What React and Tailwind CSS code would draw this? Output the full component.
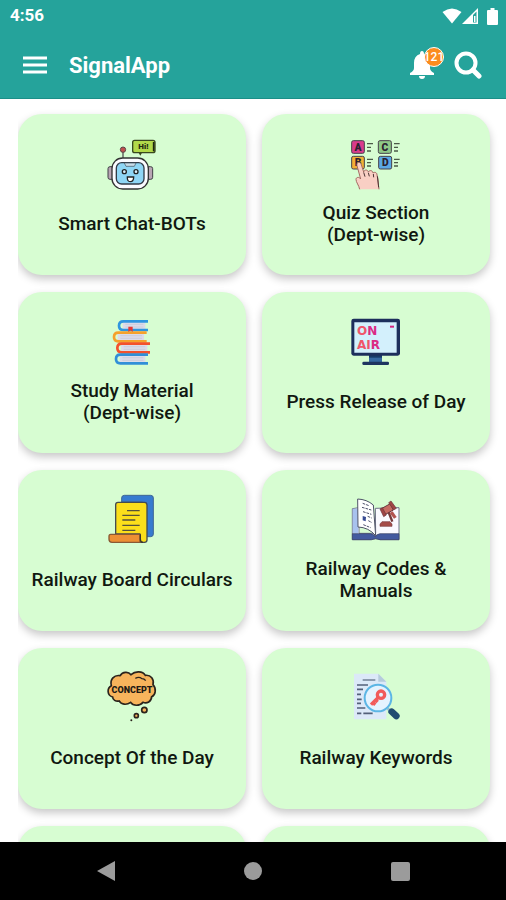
const RobotIcon = () => (
    <svg viewBox="51 24 150 150" className="h-[50px] w-[50px] overflow-visible" aria-hidden="true">
        <rect x="128" y="31" width="67" height="37" rx="6" fill="#b2d94a" stroke="#39481f" strokeWidth="4" />
        <path d="M191 36v28" stroke="#1c2512" strokeWidth="5" />
        <path d="M145 67l6 10 6-10z" fill="#39481f" />
        <text x="160" y="58" textAnchor="middle" fontSize="24" fontWeight="900" fill="#222a12" className="font-['Roboto',sans-serif]">Hi!</text>
        <path d="M99 66v18" stroke="#555" strokeWidth="4" />
        <circle cx="99" cy="59" r="8" fill="#c0504d" stroke="#5b4a4a" strokeWidth="3" />
        <rect x="54" y="110" width="18" height="38" rx="6" fill="#b9a6b4" stroke="#3f3f46" strokeWidth="3" />
        <rect x="170" y="110" width="18" height="38" rx="6" fill="#b9a6b4" stroke="#3f3f46" strokeWidth="3" />
        <rect x="66" y="84" width="109" height="93" rx="32" fill="#fbfbff" stroke="#333" strokeWidth="4" />
        <rect x="79" y="98" width="83" height="64" rx="16" fill="#8fd6f5" stroke="#333c48" strokeWidth="4" />
        <path d="M103 99h35l-5 10h-25z" fill="#c8ddea" stroke="#3d4b58" strokeWidth="2" />
        <circle cx="103" cy="125" r="6" fill="#d9f3ff" stroke="#222" strokeWidth="4" />
        <circle cx="138" cy="125" r="6" fill="#d9f3ff" stroke="#222" strokeWidth="4" />
        <path d="M112 141h19q0 14-10 14t-9-14z" fill="#fff" stroke="#222" strokeWidth="4" />
    </svg>
)

const QuizIcon = () => (
    <svg viewBox="48 24 150 150" className="h-[50px] w-[50px] overflow-visible" aria-hidden="true">
        <g stroke="#46404a" strokeWidth="3">
            <rect x="50" y="32" width="38" height="38" rx="5" fill="#d93b8c" />
            <rect x="130" y="32" width="39" height="38" rx="5" fill="#8fc987" />
            <rect x="50" y="79" width="38" height="38" rx="5" fill="#f2b035" />
            <rect x="131" y="79" width="39" height="38" rx="5" fill="#5ba8e5" />
        </g>
        <g fontSize="31" fontWeight="900" fill="#2a2130" textAnchor="middle" className="font-['Roboto',sans-serif]">
            <text x="69" y="62">A</text>
            <text x="150" y="62">C</text>
            <text x="69" y="109">B</text>
            <text x="151" y="109">D</text>
        </g>
        <path d="M96 41h18M96 52h12M96 63h12M177 41h17M177 52h12M177 63h12M96 88h18M96 98h12M96 108h12M177 88h17M177 98h12M177 108h12" stroke="#4b5a47" strokeWidth="4" />
        <path d="M74 178c-2-12-11-21-11-30 0-7 10-8 14-1l-11-40c-2-11 10-14 13-3l7 22c2-8 12-8 14 0 4-7 13-5 14 3 5-4 12-2 12 6 5 13 3 29 6 43z" fill="#f9cfc4" />
        <path d="M74 178c-2-12-11-21-11-30 0-7 10-8 14-1l-11-40c-2-11 10-14 13-3l7 22c2-8 12-8 14 0 4-7 13-5 14 3 5-4 12-2 12 6 5 13 3 29 6 43" fill="none" stroke="#a36a62" strokeWidth="3" strokeLinejoin="round" />
        <path d="M86 127l4 13M100 128l3 11M115 132l1 10M127 139l4 33" stroke="#4d3434" strokeWidth="3" fill="none" />
    </svg>
)

const Book = ({ x, y, color, end }) => (
    <g>
        <path d={`M${x + 14} ${y + 5}H${end - 8}v24H${x + 14}z`} fill="#dcdbe9" />
        <path d={`M${x + 22} ${y + 12}H${end - 14}M${x + 22} ${y + 20}H${end - 14}`} stroke="#c5c5d6" strokeWidth="2" />
        <path d={`M${end} ${y + 3}H${x + 16}Q${x + 3} ${y + 3} ${x + 3} ${y + 16}T${x + 16} ${y + 29}H${end}`} fill="none" stroke={color} strokeWidth="8" />
    </g>
)

const BooksIcon = () => (
    <svg viewBox="51 18 150 150" className="h-[50px] w-[50px] overflow-visible" aria-hidden="true">
        <Book x={84} y={31} end={174} color="#2f96df" />
        <Book x={69} y={65} end={170} color="#f5a12c" />
        <Book x={79} y={98} end={180} color="#f4512c" />
        <Book x={75} y={131} end={174} color="#318fd8" />
        <path d="M115 50h13v16l-6-5-7 5z" fill="#e53935" />
    </svg>
)

const OnAirIcon = () => (
    <svg viewBox="48 18 150 150" className="h-[50px] w-[50px] overflow-visible" aria-hidden="true">
        <path d="M102 135h39v22h-39z" fill="#3567a1" />
        <path d="M102 135h39v8h-39z" fill="#173a68" />
        <rect x="82" y="155" width="80" height="10" rx="4" fill="#1e3460" />
        <rect x="49" y="26" width="146" height="111" rx="7" fill="#1d2f5c" />
        <path d="M58 37h127v91H58z" fill="#d3f0fc" />
        <path d="M165 47h12v6h-12z" fill="#d6247f" />
        <g fontSize="36" fontWeight="700" fill="#f0566a" className="font-['DejaVu_Sans',sans-serif]">
            <text x="66" y="75">O<tspan fill="#db2b84">N</tspan></text>
            <text x="66" y="118">AI<tspan fill="#db2b84">R</tspan></text>
        </g>
    </svg>
)

const CircularIcon = () => (
    <svg viewBox="51 27 150 150" className="h-[50px] w-[50px] overflow-visible" aria-hidden="true">
        <path d="M103 31h79q8 0 8 8v108q0 8-8 8h-24V51H95V39q0-8 8-8z" fill="#377bd0" stroke="#3f6795" strokeWidth="3" />
        <path d="M77 147V59q0-7 7-7h79q8 0 8 8v105q0 7-8 7h-14v-25z" fill="#fbdf1b" stroke="#454c50" strokeWidth="4" />
        <path d="M111 77h38M97 91h52M97 105h39M97 121h52M97 136h39" stroke="#55523c" strokeWidth="4" />
        <path d="M62 148h88v24H66q-9 0-9-9v-9q0-6 5-6z" fill="#ed8f34" stroke="#8a5934" strokeWidth="4" />
        <path d="M151 148v15q0 9 8 9" stroke="#3c362b" strokeWidth="4" fill="none" />
    </svg>
)

const CodesIcon = () => (
    <svg viewBox="48 27 150 150" className="h-[50px] w-[50px] overflow-visible" aria-hidden="true">
        <path d="M52 71l20-3v77h50l-1-75 71-2v96h-57q-13-6-26 0H52z" fill="#fafaff" stroke="#6e7186" strokeWidth="3" />
        <path d="M53 71h17v75H53z" fill="#a8c2ee" />
        <path d="M52 146h55q14 3 14 10 0-7 14-10h57v18h-57q-13-6-26 0H52z" fill="#435a9f" stroke="#363e62" strokeWidth="2" />
        <path d="M68 42q27 1 47 18l7 92q-21-25-53-26z" fill="#fff" stroke="#4e5367" strokeWidth="3" />
        <path d="M83 55l19 7M81 67l28 8M84 80l25 8M98 94l12 5M100 107l11 6M85 119l22 9" stroke="#4c506a" strokeWidth="3" strokeDasharray="8 3" />
        <path d="M83 93l10 3-1 13-9-3z" fill="#374b92" />
        <path d="M157 72l15 38" stroke="#733a3b" strokeWidth="7" />
        <path d="M139 71l27-15 9 19-27 15z" fill="#c66b62" stroke="#69363b" strokeWidth="3" />
        <path d="M135 72l7-4 12 22-8 5zM161 53l7-5 16 22-8 5z" fill="#a04445" stroke="#69363b" strokeWidth="2" />
        <path d="M164 84l9-5 12 17-8 5z" fill="#b35450" />
        <path d="M135 124v-7l6-7h24l6 7v7z" fill="#a54c48" stroke="#7b4144" strokeWidth="2" />
    </svg>
)

const ConceptIcon = () => (
    <svg viewBox="51 30 150 150" className="h-[50px] w-[50px] overflow-visible" aria-hidden="true">
        <g fill="#f7b45c" stroke="#2b241d" strokeWidth="5">
            <path d="M68 105c-17-5-18-26-4-34-5-19 9-33 26-30 8-12 25-13 33-3 13-12 35-11 43 2 17-2 27 12 23 28 11 12 8 31-4 36-1 15-14 22-26 17-11 12-30 11-37 0-12 9-29 7-34-4-11 2-20-3-20-12z" />
            <circle cx="163" cy="144" r="8" />
            <circle cx="139" cy="161" r="6" />
        </g>
        <circle cx="124" cy="175" r="3" fill="#2b241d" />
        <path d="M136 49q11-6 20 1 7 0 11 6" fill="none" stroke="#2b241d" strokeWidth="4" />
        <text x="126" y="93" fontSize="27" fontWeight="900" fill="#201a14" textAnchor="middle" className="font-['Roboto',sans-serif]">CONCEPT</text>
    </svg>
)

const KeywordIcon = () => (
    <svg viewBox="48 30 150 150" className="h-[50px] w-[50px] overflow-visible" aria-hidden="true">
        <path d="M57 35h73l24 24v113H57z" fill="#dce9f8" />
        <path d="M130 35l24 24h-24z" fill="#b5cbdc" />
        <path d="M83 54h38" stroke="#7c8ba1" strokeWidth="5" />
        <path d="M66 69h33M66 82h18M66 97h12M66 112h14M66 124h12M66 138h25M66 154h13M85 154h28" stroke="#536079" strokeWidth="5" />
        <path d="M158 140l12 9" stroke="#93bdd1" strokeWidth="8" />
        <path d="M170 149l14 13" stroke="#214c72" strokeWidth="20" strokeLinecap="round" />
        <circle cx="129" cy="108" r="40" fill="#e4f3ff" stroke="#5cb6e5" strokeWidth="6" />
        <circle cx="138" cy="98" r="11" fill="none" stroke="#f15b5b" strokeWidth="10" />
        <path d="M129 107l-21 21m6-6 7 6m1-14 6 6" stroke="#f15b5b" strokeWidth="10" />
    </svg>
)

const cards = [
    { lines: ['Smart Chat-BOTs'], Icon: RobotIcon },
    { lines: ['Quiz Section', '(Dept-wise)'], Icon: QuizIcon },
    { lines: ['Study Material', '(Dept-wise)'], Icon: BooksIcon },
    { lines: ['Press Release of Day'], Icon: OnAirIcon },
    { lines: ['Railway Board Circulars'], Icon: CircularIcon },
    { lines: ['Railway Codes &', 'Manuals'], Icon: CodesIcon },
    { lines: ['Concept Of the Day'], Icon: ConceptIcon },
    { lines: ['Railway Keywords'], Icon: KeywordIcon },
    { lines: [] },
    { lines: [] },
]

const MenuCard = ({ lines, Icon }) => (
    <button type="button" className="flex h-[161px] flex-col items-center rounded-3xl bg-[#d7fdd2] pt-6 shadow-[0_4px_8px_rgba(0,0,0,0.22)]">
        {Icon && <Icon />}
        <span className="mt-3.5 flex h-11 flex-col justify-center text-[19px] leading-[22px] font-medium whitespace-nowrap text-[#101810]">
            {lines.map((line) => <span key={line}>{line}</span>)}
        </span>
    </button>
)

const StatusBar = () => (
    <div className="flex h-8 items-center justify-between pr-2 pl-2.5">
        <span className="text-[17px] font-bold">4:56</span>
        <div className="flex items-center">
            {/* Wifi, signal and battery */}
            <svg viewBox="0 0 20 16" className="h-4 w-5" fill="#fff" aria-hidden="true">
                <path d="M.5 4Q10-3 19.500 4L10 15.500z" />
            </svg>
            <svg viewBox="0 0 17 17" className="h-[17px] w-[17px]" aria-hidden="true">
                <path d="M0 16L16 0v16z" fill="#fff" />
                <path d="M11 7l3.500-3.500v11H11z" fill="#25a39b" />
                <path d="M12 8h1.500v6H12z" fill="#fff" />
            </svg>
            <svg viewBox="0 0 11 17" className="ml-2 h-[17px] w-[11px]" fill="#fff" aria-hidden="true">
                <path d="M3.500 0h4v2H10q1 0 1 1v13q0 1-1 1H1q-1 0-1-1V3q0-1 1-1h2.500z" />
            </svg>
        </div>
    </div>
)

const AppBar = () => (
    <div className="flex h-[66px] items-center pr-6 pl-[23px]">
        <button type="button" aria-label="Menu">
            <svg viewBox="0 0 24 20" className="h-5 w-6" aria-hidden="true">
                <path d="M0 3h24M0 10h24M0 17h24" stroke="#fff" strokeWidth="3" />
            </svg>
        </button>
        <h1 className="ml-[22px] text-[22px] font-bold">SignalApp</h1>
        <button type="button" aria-label="Notifications" className="relative ml-auto">
            <svg viewBox="0 0 24 28" className="h-7 w-6" fill="#fff" aria-hidden="true">
                <path d="M12 0q2 0 2 3 6 2 6 9v5q0 3 4 5v2H0v-2q4-2 4-5v-5q0-7 6-9 0-3 2-3zM9 25h6q0 3-3 3t-3-3z" />
            </svg>
            <span className="absolute -top-1 left-3.5 flex h-5 w-5 items-center justify-center overflow-hidden rounded-full border border-white bg-[#fb8c1e] text-xs font-medium">121</span>
        </button>
        <button type="button" aria-label="Search" className="ml-5">
            <svg viewBox="0 0 28 28" className="h-7 w-7" fill="none" stroke="#fff" aria-hidden="true">
                <circle cx="12" cy="12" r="9.500" strokeWidth="4" />
                <path d="M19 19l6 6" strokeWidth="5" strokeLinecap="round" />
            </svg>
        </button>
    </div>
)

const NavBar = () => (
    <nav className="grid h-[58px] shrink-0 grid-cols-3 bg-black px-8">
        <button type="button" aria-label="Back" className="flex items-center justify-center">
            <svg viewBox="0 0 18 20" className="h-5 w-[18px]" fill="#9b9b9b" aria-hidden="true"><path d="M0 10L18 0v20z" /></svg>
        </button>
        <button type="button" aria-label="Home" className="flex items-center justify-center">
            <span className="h-[18px] w-[18px] rounded-full bg-[#9b9b9b]" />
        </button>
        <button type="button" aria-label="Recent apps" className="flex items-center justify-center">
            <span className="h-[19px] w-[19px] rounded-xs bg-[#9b9b9b]" />
        </button>
    </nav>
)

const App = () => {
    return (
        <div className="flex h-screen flex-col bg-white font-['Roboto',sans-serif]">
            <header className="shrink-0 border-b border-[#1b8f88] bg-[#25a39b] text-white">
                <StatusBar />
                <AppBar />
            </header>

            {/* Card grid */}
            <main className="ml-[18px] min-h-0 flex-1 overflow-y-auto [scrollbar-width:none]">
                <div className="grid grid-cols-2 gap-x-4 gap-y-[17px] pt-[15px] pr-4 pb-4">
                    {cards.map((card, i) => <MenuCard key={i} {...card} />)}
                </div>
            </main>

            <NavBar />
        </div>
    )
}

export default App
